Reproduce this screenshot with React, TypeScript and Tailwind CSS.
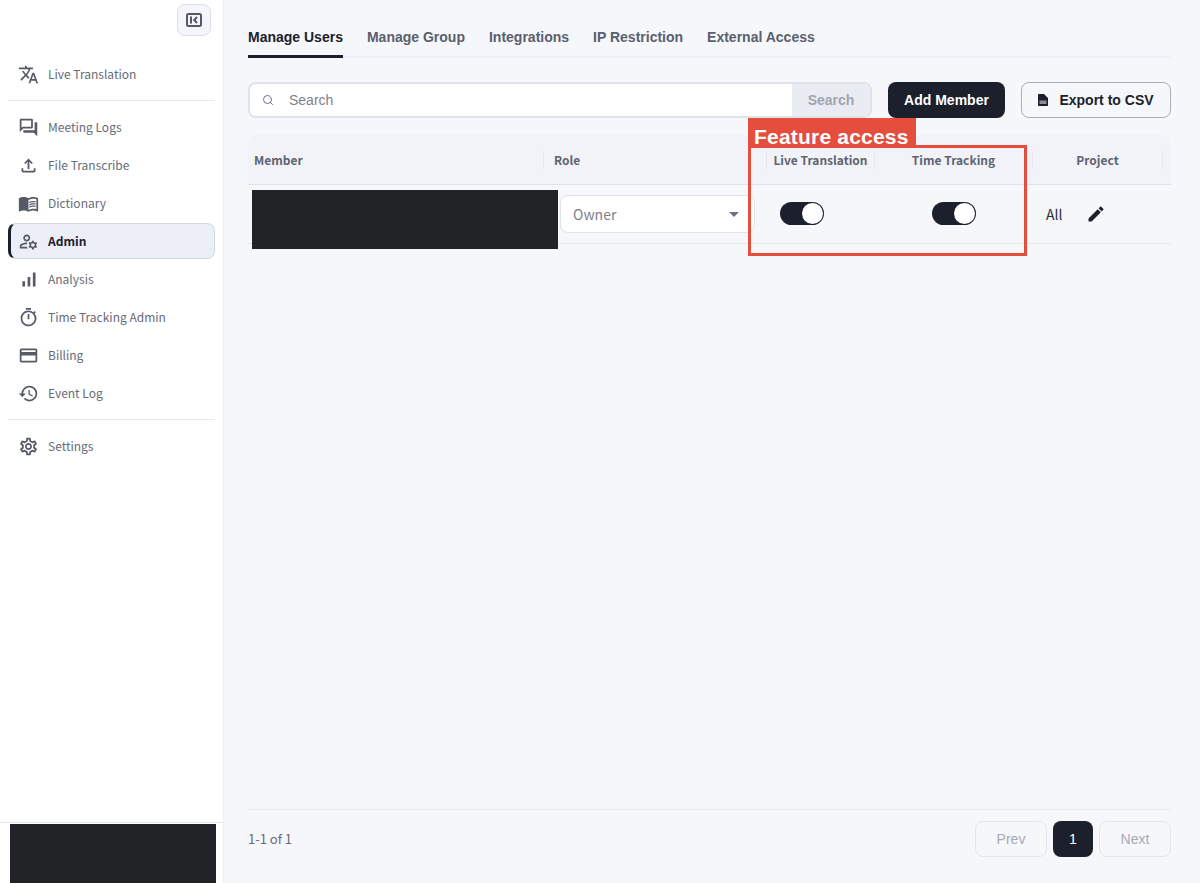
import React from "react";
import {
  MdTranslate,
  MdOutlineForum,
  MdOutlineFileUpload,
  MdMenuBook,
  MdOutlineManageAccounts,
  MdOutlineSignalCellularAlt,
  MdOutlineTimer,
  MdCreditCard,
  MdHistory,
  MdOutlineSettings,
  MdEdit,
  MdArrowDropDown,
} from "react-icons/md";
import { Search } from "lucide-react";

const cjk = "font-['Noto_Sans_CJK_JP','Noto_Sans',sans-serif]";
const arial = "font-['Liberation_Sans',Arial,sans-serif]";

const NavItem = ({
  icon,
  label,
  active,
}: {
  icon: React.ReactNode;
  label: string;
  active?: boolean;
}) => (
  <div
    className={
      active
        ? "flex h-9 my-px items-center rounded-lg border border-[#d5d8e0] border-l-[3px] border-l-[#1c202c] bg-[#eceff7] pl-[7px] text-[#1c202c] font-bold"
        : "flex h-[38px] items-center pl-[10px] text-[#676b77]"
    }
  >
    <span className="flex w-[30px] text-[21px] text-[#555a66]">{icon}</span>
    <span className="text-[12px] leading-none">{label}</span>
  </div>
);

const Sidebar = () => (
  <aside className={`flex h-full w-[224px] shrink-0 flex-col border-r border-[#eceef3] bg-white ${cjk}`}>
    <div className="flex justify-end pr-3 pt-1">
      <button className="flex h-8 w-[34px] items-center justify-center rounded-lg border border-[#dcdfe8] bg-[#f4f6fb]">
        <svg width="16" height="16" viewBox="0 0 16 16" fill="none" stroke="#555a66" strokeWidth="2">
          <rect x="1" y="2" width="14" height="12" rx="1.5" />
          <path d="M5 4.5v7" />
          <path d="M11 5 8.200 8l2.800 3" />
        </svg>
      </button>
    </div>
    <div className="mx-2 mt-[19px] border-b border-[#e8eaee] pb-[7px]">
      <NavItem icon={<MdTranslate />} label="Live Translation" />
    </div>
    <div className="mx-2 mt-[7px] border-b border-[#e8eaee] pb-[7px]">
      <NavItem icon={<MdOutlineForum />} label="Meeting Logs" />
      <NavItem icon={<MdOutlineFileUpload />} label="File Transcribe" />
      <NavItem icon={<MdMenuBook />} label="Dictionary" />
      <NavItem icon={<MdOutlineManageAccounts />} label="Admin" active />
      <NavItem icon={<MdOutlineSignalCellularAlt />} label="Analysis" />
      <NavItem icon={<MdOutlineTimer />} label="Time Tracking Admin" />
      <NavItem icon={<MdCreditCard />} label="Billing" />
      <NavItem icon={<MdHistory />} label="Event Log" />
    </div>
    <div className="mx-2 mt-[7px]">
      <NavItem icon={<MdOutlineSettings />} label="Settings" />
    </div>
    <div className="mt-auto border-t border-[#e3e5ea] pl-[10px] pr-[7px] pt-px">
      <div className="h-[59px] bg-[#212327]" />
    </div>
  </aside>
);

const tabs = ["Manage Group", "Integrations", "IP Restriction", "External Access"];

const Tabs = () => (
  <div className={`flex h-[58px] items-end gap-6 border-b-2 border-[#eef0f5] text-[14px] font-bold ${arial}`}>
    <div className="-mb-0.5 h-[58px] border-b-[3px] border-[#1c202c] pt-[29px] leading-4 text-[#1c202c]">Manage Users</div>
    {tabs.map((t) => (
      <div key={t} className="-mb-0.5 h-[58px] pt-[29px] leading-4 text-[#5a5f6d]">
        {t}
      </div>
    ))}
  </div>
);

const SearchBar = () => (
  <div className={`mt-6 flex h-9 gap-4 ${arial}`}>
    <div className="flex flex-1 overflow-hidden rounded-lg border-2 border-[#dfe2e9] bg-white">
      <div className="flex w-[39px] items-center justify-center pr-[3px] text-[#6f7380]">
        <Search size={12} />
      </div>
      <div className="flex flex-1 items-center text-[14px] text-[#7d818c]">Search</div>
      <div className="flex w-[78px] items-center justify-center bg-[#e9ecf3] text-[14px] font-bold text-[#a0a4b0]">Search</div>
    </div>
    <button className="h-9 w-[117px] rounded-lg bg-[#1c202c] text-[14px] font-bold text-white">Add Member</button>
    <button className="flex h-9 w-[150px] items-center justify-center gap-[11px] rounded-lg border border-[#a9acb3] text-[14px] font-bold text-[#1c202c]">
      <svg width="10" height="12" viewBox="0 0 10 12">
        <path d="M0 1C0 .4.400 0 1 0h5l4 4v7c0 .6-.4 1-1 1H1c-.6 0-1-.4-1-1z" fill="#1c202c" />
        <rect x="1.500" y="6.500" width="7" height="3.500" fill="#8b8e96" />
      </svg>
      Export to CSV
    </button>
  </div>
);

const HeadCell = ({ w, label, center }: { w: string; label: string; center?: boolean }) => (
  <div className={`flex h-[18px] items-center border-r border-[#e6e8ee] ${w} ${center ? "justify-center" : ""}`}>
    <span className={center ? "" : "pl-[6px]"}>{label}</span>
  </div>
);

const Toggle = () => (
  <div className="flex h-[23px] w-11 items-center justify-end rounded-full bg-[#1c202c] pr-px">
    <div className="h-[21px] w-[21px] rounded-full bg-white" />
  </div>
);

const MemberTable = () => (
  <div className={`mt-[17px] ${cjk}`}>
    <div className="flex h-[50px] items-center rounded-t-lg border-b border-[#dfe2e9] bg-[#f1f3f8] text-[12px] font-bold text-[#5f6471]">
      <HeadCell w="w-[296px]" label="Member" />
      <div className="flex h-[18px] w-[223px] items-center border-r border-[#e6e8ee] pl-[10px]">Role</div>
      <HeadCell w="w-[108px]" label="Live Translation" center />
      <HeadCell w="w-[158px]" label="Time Tracking" center />
      <HeadCell w="w-[130px]" label="Project" center />
    </div>
    <div className="flex h-[59px] items-center border-b border-[#e6e8ee]">
      <div className="w-[312px] shrink-0 self-start pl-1 pt-[5px]">
        <div className="h-[59px] w-[306px] bg-[#212327]" />
      </div>
      <div className="flex h-[38px] w-[195px] shrink-0 items-center justify-between rounded-lg border border-[#e1e3e9] bg-white pl-3 pr-[8px] text-[14px] text-[#7d818c]">
        Owner
        <MdArrowDropDown className="text-[24px] text-[#6f7380]" />
      </div>
      <div className="ml-[25px] w-[152px] shrink-0 -translate-y-[1px]">
        <Toggle />
      </div>
      <div className="w-[113px] shrink-0 -translate-y-[1px]">
        <Toggle />
      </div>
      <span className="w-[41px] pl-px text-[14px] text-[#2a2d35]">All</span>
      <MdEdit className="text-[20px] text-[#1c202c]" />
    </div>
  </div>
);

const Pager = () => (
  <div className={`flex h-[74px] items-start justify-between border-t border-[#e9ebf0] pt-[11px] ${arial}`}>
    <span className={`mt-[11px] text-[13px] leading-none text-[#676b77] ${cjk}`}>1-1 of 1</span>
    <div className="flex gap-[6px] text-[14px]">
      <button className="h-9 w-[72px] rounded-lg border border-[#e3e5ea] text-[#a7aab3]">Prev</button>
      <button className="h-9 w-10 rounded-lg bg-[#1c202c] text-white">1</button>
      <button className="h-9 w-[72px] rounded-lg border border-[#e3e5ea] text-[#a7aab3]">Next</button>
    </div>
  </div>
);

export default function App() {
  return (
    <div className="flex h-screen overflow-hidden bg-[#f5f7fb]">
      <Sidebar />
      <main className="relative flex flex-1 flex-col pl-6 pr-[29px]">
        <div className="flex-1">
          <Tabs />
          <SearchBar />
          <MemberTable />
        </div>
        <Pager />

        {/* feature access callout */}
        <div className={`absolute left-[524px] top-[118px] h-[29px] w-[168px] bg-[#e54d3c] pl-[6px] text-[21px] font-bold leading-[38px] tracking-[0.2px] text-white ${arial}`}>
          Feature access
        </div>
        <div className="absolute left-[524px] top-[145px] h-[111px] w-[279px] border-[3px] border-[#e54d3c]" />
      </main>
    </div>
  );
}
